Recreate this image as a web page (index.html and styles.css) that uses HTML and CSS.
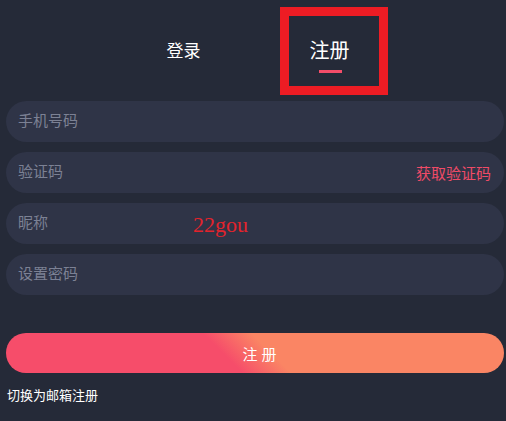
FILE: index.html
```html
<!DOCTYPE html>
<html lang="en">
<head>
    <meta charset="UTF-8">
    <meta name="viewport" content="width=device-width, initial-scale=1.0">
    <title>注册</title>
    <link rel="stylesheet" href="styles.css">
</head>
<body>
    <div class="tabs">
        <div class="tab"><span class="tab-text">登录</span></div>
        <div class="tab active"><span class="tab-text">注册</span><span class="bar"></span></div>
    </div>
    <div class="mark-box"></div>

    <form class="form">
        <div class="field"><input type="text" placeholder="手机号码"></div>
        <div class="field"><input type="text" placeholder="验证码"><span class="code">获取验证码</span></div>
        <div class="field"><input type="text" placeholder="昵称"></div>
        <div class="field"><input type="password" placeholder="设置密码"></div>

        <button type="button" class="submit">注册</button>
        <div class="switch">切换为邮箱注册</div>
    </form>

    <div class="watermark">22gou</div>
</body>
</html>
```

FILE: styles.css
```css
body{
    margin: 0;
    background-color: #252a38;
    font-family: "Noto Sans CJK SC", "Noto Sans", sans-serif;
    color: white;
    height: 421px;
    overflow: hidden;
}
.tabs{
    display: flex;
    justify-content: center;
    height: 101px;
    padding-top: 40px;
    padding-left: 7px;
    box-sizing: border-box;
}
.tab{
    width: 146px;
    display: flex;
    flex-direction: column;
    align-items: center;
}
.tab-text{
    font-size: 17px;
    line-height: 20px;
}
.tab.active .tab-text{
    font-size: 20px;
}
.bar{
    width: 23px;
    height: 3px;
    margin-top: 10px;
    margin-left: 1px;
    background-color: #f44d69;
}
.mark-box{
    position: absolute;
    left: 280px;
    top: 7px;
    width: 90px;
    height: 70px;
    border: 9px solid #ed1c24;
}
.form{
    padding-left: 6px;
    width: 498px;
}
.field{
    display: flex;
    align-items: center;
    height: 41px;
    margin-bottom: 10px;
    padding: 0 13px 0 12px;
    border-radius: 21px;
    background-color: #2f3447;
}
.field input{
    flex: 1;
    min-width: 0;
    background: transparent;
    border: none;
    outline: none;
    padding: 0;
    color: white;
    font-family: inherit;
    font-size: 15px;
    margin-top: -4px;
}
.field input::placeholder{
    color: #7c8194;
}
.code{
    color: #f04b67;
    font-size: 15px;
}
.submit{
    display: block;
    width: 498px;
    height: 40px;
    margin-top: 38px;
    border: none;
    border-radius: 20px;
    background: linear-gradient(45deg, #f64d6a 44%, #fa8564 53%);
    color: white;
    font-family: inherit;
    font-size: 15px;
    letter-spacing: 4px;
    text-indent: 13px;
}
.switch{
    font-size: 13px;
    line-height: 17px;
    margin-top: 13px;
    padding-left: 1px;
}
.watermark{
    position: absolute;
    left: 193px;
    top: 214px;
    font-family: "Liberation Serif", serif;
    font-size: 22px;
    line-height: 22px;
    color: #e3232c;
}
```
